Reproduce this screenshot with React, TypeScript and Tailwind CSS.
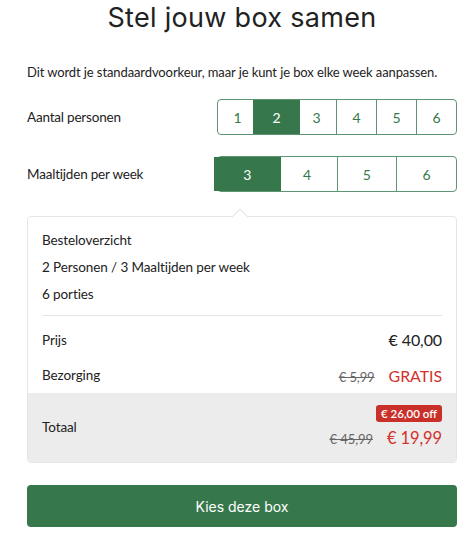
import { FC } from "react";

const body = { fontFamily: "Lato, 'Noto Sans', sans-serif" };
const heading = { fontFamily: "Inter, 'Liberation Sans', sans-serif" };

type GroupProps = {
  options: number[];
  selected: number;
};

const OptionGroup: FC<GroupProps> = ({ options, selected }) => (
  <div className="flex h-9 w-[240px] rounded border border-[#5e9673] bg-white">
    {options.map((n, i) => {
      const active = n === selected;
      return (
        <button
          key={n}
          className={
            active
              ? "relative z-10 flex flex-1 items-center justify-center bg-[#36784b] text-[14px] text-white shadow-[4px_0_0_0_#36784b,-4px_0_0_0_#36784b]"
              : i === 0
              ? "flex flex-1 items-center justify-center text-[14px] text-[#36784b]"
              : "flex flex-1 items-center justify-center border-l border-[#5e9673] text-[14px] text-[#36784b]"
          }
        >
          {n}
        </button>
      );
    })}
  </div>
);

export default function App() {
  return (
    <div className="h-[553px] w-[475px] bg-white text-[#222]" style={body}>
      <div className="ml-[27px] w-[430px]">
        <h1
          className="pt-[2px] text-center text-[27px] leading-[32px] font-normal tracking-[0.3px] text-[#222]"
          style={heading}
        >
          Stel jouw box samen
        </h1>

        <p className="mt-[28px] whitespace-nowrap text-[13px] leading-5 tracking-[-0.1px]">
          Dit wordt je standaardvoorkeur, maar je kunt je box elke week aanpassen.
        </p>

        <div className="mt-[17px] flex items-center justify-between">
          <span className="text-[13.5px] tracking-[-0.2px]">Aantal personen</span>
          <OptionGroup options={[1, 2, 3, 4, 5, 6]} selected={2} />
        </div>

        <div className="mt-[21px] flex items-center justify-between">
          <span className="text-[13.5px] tracking-[-0.2px]">Maaltijden per week</span>
          <OptionGroup options={[3, 4, 5, 6]} selected={3} />
        </div>

        {/* overzicht */}
        <div className="relative mt-[24px] rounded border border-[#e6e6e6] bg-white">
          <span className="absolute -top-[8px] left-[206px] h-[12px] w-[12px] translate-y-[2px] rotate-45 border-t border-l border-[#e6e6e6] bg-white" />
          <div className="px-[14px] pt-[10px] text-[13.5px] tracking-[-0.1px]">
            <p className="leading-[27px]">Besteloverzicht</p>
            <p className="leading-[27px]">2 Personen / 3 Maaltijden per week</p>
            <p className="leading-[27px]">6 porties</p>
            <div className="mt-[7px] border-t border-[#e6e6e6]" />
            <div className="mt-[6px] flex h-[36px] items-center justify-between">
              <span>Prijs</span>
              <span className="text-[16px]">€ 40,00</span>
            </div>
            <div className="flex h-[35px] items-center justify-between">
              <span>Bezorging</span>
              <span className="flex items-baseline gap-[14px]">
                <span className="text-[13px] text-[#666] line-through">€ 5,99</span>
                <span className="text-[16px] text-[#d2322d]">GRATIS</span>
              </span>
            </div>
          </div>
          <div className="flex h-[69px] items-center justify-between rounded-b bg-[#ececec] px-[14px] text-[13.5px] tracking-[-0.1px]">
            <span>Totaal</span>
            <div className="flex flex-col items-end pt-[1px]">
              <span className="rounded-[3px] bg-[#c9302a] px-[5px] text-[11.5px] leading-[17px] font-semibold tracking-normal text-white">
                € 26,00 off
              </span>
              <span className="mt-[4px] flex items-baseline gap-[14px] leading-[24px]">
                <span className="text-[13px] text-[#666] line-through">€ 45,99</span>
                <span className="text-[16.5px] text-[#d2322d]">€ 19,99</span>
              </span>
            </div>
          </div>
        </div>

        <button
          className="mt-[22px] flex h-[42px] w-full items-center justify-center rounded bg-[#36784b] text-[14px] text-white"
          style={heading}
        >
          Kies deze box
        </button>
      </div>
    </div>
  );
}
